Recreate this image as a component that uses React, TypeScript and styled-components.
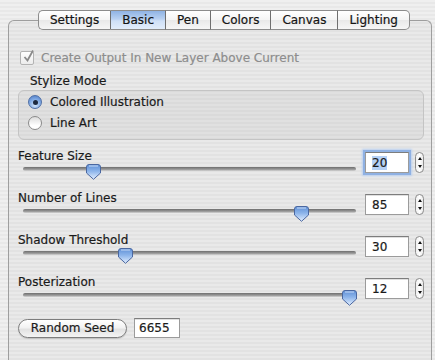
import * as React from 'react';
import styled, { createGlobalStyle } from 'styled-components';

const GlobalStyle = createGlobalStyle`
  html, body {
    margin: 0;
    padding: 0;
    overflow: hidden;
  }
  body {
    font-family: "DejaVu Sans", "Liberation Sans", sans-serif;
    font-size: 12px;
    color: #1a1a1a;
    -webkit-text-stroke: 0.2px currentColor;
  }
`;

const Window = styled.div`
  width: 435px;
  height: 360px;
  box-sizing: border-box;
  padding: 10px 3px 0 8px;
  background: repeating-linear-gradient(#efefef 0 2px, #e8e8e8 2px 4px);
  overflow: hidden;
`;

const TabBar = styled.div`
  position: relative;
  z-index: 1;
  display: flex;
  margin-left: 30px;
  height: 20px;
`;

const Tab = styled.div<{ $active?: boolean; $first?: boolean; $last?: boolean }>`
  display: flex;
  align-items: center;
  justify-content: center;
  padding: 0 11px;
  height: 100%;
  box-sizing: border-box;
  border: 1px solid #8c8c8c;
  border-left: ${p => (p.$first ? '1px solid #8c8c8c' : '0')};
  border-radius: ${p => (p.$first ? '5px 0 0 5px' : p.$last ? '0 5px 5px 0' : '0')};
  background: ${p =>
    p.$active
      ? 'linear-gradient(#8fb3e4, #b9d1f1 45%, #cfe0f7 55%, #e2edfb)'
      : 'linear-gradient(#ffffff, #f4f4f4 50%, #e9e9e9 52%, #f6f6f6)'};
  border-right-color: ${p => (p.$last ? '#8c8c8c' : '#6f6f6f')};
  color: #151515;
  font-size: 12px;
  white-space: nowrap;
`;

const Panel = styled.div`
  margin-top: -10px;
  height: 360px;
  box-sizing: border-box;
  border: 1px solid #9e9e9e;
  border-bottom: 0;
  border-radius: 6px 6px 0 0;
  background: rgba(0, 0, 0, 0.025);
  padding: 29px 7px 0 9px;
  display: flex;
  flex-direction: column;
`;

const CheckRow = styled.label`
  display: flex;
  align-items: center;
  gap: 7px;
  height: 16px;
  margin-left: 2px;
  color: #8d8d8d;
`;

const CheckBox = styled.span`
  width: 12px;
  height: 12px;
  border: 1px solid #b3b3b3;
  border-radius: 2px;
  background: linear-gradient(#ffffff, #ececec);
  position: relative;
  flex: none;
`;

const CheckMark = styled.svg`
  position: absolute;
  left: 1px;
  top: -3px;
`;

const GroupTitle = styled.div`
  margin: 8px 0 0 12px;
  line-height: 14px;
`;

const GroupBox = styled.div`
  margin: 2px 0 0 0;
  height: 50px;
  box-sizing: border-box;
  border: 1px solid #c4c4c4;
  border-radius: 6px;
  background: rgba(0, 0, 0, 0.035);
  padding: 4px 0 0 9px;
  display: flex;
  flex-direction: column;
  gap: 7px;
`;

const RadioRow = styled.label`
  display: flex;
  align-items: center;
  gap: 8px;
  height: 14px;
`;

const Radio = styled.span<{ $on?: boolean }>`
  width: 14px;
  height: 14px;
  box-sizing: border-box;
  border-radius: 50%;
  border: 1px solid ${p => (p.$on ? '#4f6fa6' : '#8a8a8a')};
  background: ${p =>
    p.$on
      ? 'radial-gradient(circle at 50% 75%, #d4e6fb, #7ea8e3 55%, #4a78c4)'
      : 'linear-gradient(#dcdcdc, #ffffff 70%)'};
  display: flex;
  align-items: center;
  justify-content: center;
  flex: none;
  &::after {
    content: '';
    display: ${p => (p.$on ? 'block' : 'none')};
    width: 5px;
    height: 5px;
    border-radius: 50%;
    background: #1d2a40;
  }
`;

const Sliders = styled.div`
  margin-top: 9px;
  display: flex;
  flex-direction: column;
`;

const SliderRow = styled.div`
  display: grid;
  grid-template-columns: 1fr 44px 9px;
  column-gap: 6px;
  height: 42px;
`;

const SliderCol = styled.div`
  display: flex;
  flex-direction: column;
  margin-right: 3px;
`;

const Label = styled.div`
  line-height: 14px;
  height: 14px;
`;

const Track = styled.div`
  position: relative;
  margin: 4px 0 0 5px;
  height: 4px;
  border-radius: 2px;
  background: linear-gradient(#6e6e6e, #9a9a9a 60%, #d6d6d6);
`;

const Knob = styled.svg`
  position: absolute;
  top: -3px;
`;

const NumberBox = styled.div<{ $focus?: boolean }>`
  margin-top: 3px;
  height: 21px;
  box-sizing: border-box;
  background: #fff;
  border: 1px solid #9b9b9b;
  border-top-color: #7d7d7d;
  padding: 0 6px;
  display: flex;
  align-items: center;
  font-size: 12px;
  box-shadow: ${p => (p.$focus ? '0 0 0 2px #8fb1e3, 0 0 2px 3px #b9cff0' : 'inset 0 1px 0 #e0e0e0')};
`;

const Selected = styled.span`
  background: #b5d1f6;
`;

const Stepper = styled.div`
  margin-top: 3px;
  width: 9px;
  height: 21px;
  box-sizing: border-box;
  border: 1px solid #8d8d8d;
  border-radius: 5px;
  background: linear-gradient(90deg, #f0f0f0, #ffffff 50%, #eaeaea);
  display: flex;
  flex-direction: column;
  align-items: center;
  justify-content: space-between;
  padding: 4px 0;
  &::before {
    content: '';
    border: 2.5px solid transparent;
    border-bottom: 3px solid #111;
    border-top: 0;
  }
  &::after {
    content: '';
    border: 2.5px solid transparent;
    border-top: 3px solid #111;
    border-bottom: 0;
  }
`;

const SeedRow = styled.div`
  display: flex;
  align-items: center;
  gap: 7px;
  margin-top: 1px;
`;

const PillButton = styled.button`
  width: 109px;
  height: 19px;
  border: 1px solid #7d7d7d;
  border-radius: 10px;
  background: linear-gradient(#ffffff, #f2f2f2 45%, #e2e2e2 55%, #f4f4f4);
  font-family: inherit;
  font-size: 12px;
  color: #1c1c1c;
  padding: 0;
  box-shadow: 0 1px 1px rgba(0, 0, 0, 0.15);
`;

const SeedBox = styled(NumberBox)`
  margin-top: 0;
  width: 46px;
  height: 20px;
  padding: 0 4px;
`;

interface SliderSpec {
  label: string;
  value: number;
  frac: number;
  focus?: boolean;
}

const sliders: SliderSpec[] = [
  { label: 'Feature Size', value: 20, frac: 0.2, focus: true },
  { label: 'Number of Lines', value: 85, frac: 0.85 },
  { label: 'Shadow Threshold', value: 30, frac: 0.3 },
  { label: 'Posterization', value: 12, frac: 1 },
];

const tabs = ['Settings', 'Basic', 'Pen', 'Colors', 'Canvas', 'Lighting'];

const KnobIcon = ({ frac }: { frac: number }) => (
  <Knob
    width="15"
    height="16"
    viewBox="0 0 15 16"
    style={{ left: `calc(${frac * 100}% - ${frac * 14}px - 0.5px)` }}
  >
    <defs>
      <linearGradient id="kg" x1="0" y1="0" x2="0" y2="1">
        <stop offset="0" stopColor="#5f8fd6" />
        <stop offset="0.45" stopColor="#8cb4ea" />
        <stop offset="1" stopColor="#e4efff" />
      </linearGradient>
    </defs>
    <path
      d="M3 0.5 H12 Q14.5 0.5 14.5 3 V9 L7.5 15.3 L0.5 9 V3 Q0.5 0.5 3 0.5 Z"
      fill="url(#kg)"
      stroke="#4a67a0"
      strokeWidth="1"
    />
    <path d="M3 2 H12" stroke="#c9dcf6" strokeWidth="1" />
  </Knob>
);

export default function App() {
  return (
    <Window>
      <GlobalStyle />
      <TabBar>
        {tabs.map((t, i) => (
          <Tab key={t} $active={t === 'Basic'} $first={i === 0} $last={i === tabs.length - 1}>
            {t}
          </Tab>
        ))}
      </TabBar>
      <Panel>
        <CheckRow>
          <CheckBox>
            <CheckMark width="13" height="14" viewBox="0 0 13 14">
              <path d="M2.5 8 L5.5 11.5 L11 1.5" fill="none" stroke="#8a8a8a" strokeWidth="1.8" />
            </CheckMark>
          </CheckBox>
          Create Output In New Layer Above Current
        </CheckRow>
        <GroupTitle>Stylize Mode</GroupTitle>
        <GroupBox>
          <RadioRow>
            <Radio $on />
            Colored Illustration
          </RadioRow>
          <RadioRow>
            <Radio />
            Line Art
          </RadioRow>
        </GroupBox>
        <Sliders>
          {sliders.map(s => (
            <SliderRow key={s.label}>
              <SliderCol>
                <Label>{s.label}</Label>
                <Track>
                  <KnobIcon frac={s.frac} />
                </Track>
              </SliderCol>
              <NumberBox $focus={s.focus}>
                {s.focus ? <Selected>{s.value}</Selected> : s.value}
              </NumberBox>
              <Stepper />
            </SliderRow>
          ))}
        </Sliders>
        <SeedRow>
          <PillButton>Random Seed</PillButton>
          <SeedBox>6655</SeedBox>
        </SeedRow>
      </Panel>
    </Window>
  );
}
